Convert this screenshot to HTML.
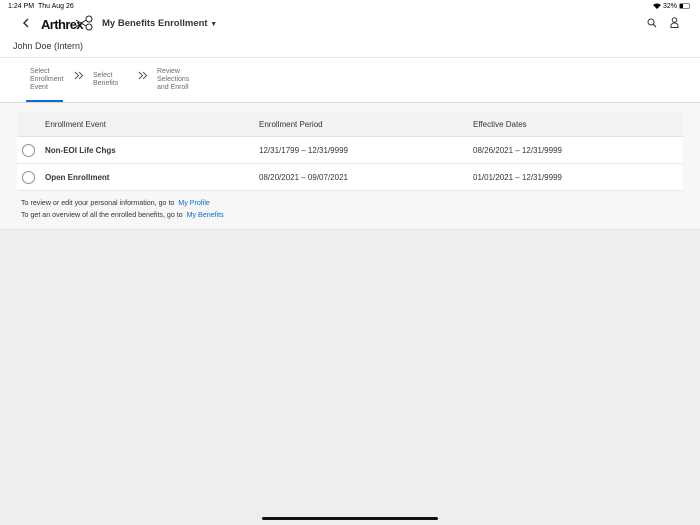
<!DOCTYPE html>
<html><head><meta charset="utf-8"><style>
*{margin:0;padding:0;box-sizing:border-box}
body{width:700px;height:525px;background:#edeef0;font-family:"Liberation Sans",Arial,sans-serif;position:relative;overflow:hidden;color:#32363a}
.a{position:absolute}
.top{left:0;top:0;width:700px;height:58px;background:#fff;border-bottom:1px solid #e5e5e5}
.wiz{left:0;top:58px;width:700px;height:45px;background:#fff;border-bottom:1px solid #d9d9d9}
.sec{left:0;top:103px;width:700px;height:127px;background:#f7f7f7;border-bottom:1px solid #e2e2e2}
.step{font-size:7px;color:#6a6d70;line-height:8px}
.tbl{left:17px;top:112px;width:666px;height:79px;background:#fff}
.th{left:0;top:0;width:666px;height:25px;background:#f2f2f2;border-bottom:1px solid #e0e0e0;font-size:8px;color:#32363a}
.row{left:0;width:666px;height:27px;border-bottom:1px solid #e8e8e8;font-size:8px}
.rad{left:5px;top:7px;width:13px;height:13px;border:1px solid #89919a;border-radius:50%}
.lnk{color:#0a6ed1}
</style></head><body>
<div class="a top">
 <div class="a" style="left:8px;top:3px;font-size:7px;color:#000">1:24 PM&nbsp;&nbsp;Thu Aug 26</div>
 <div class="a" style="left:653px;top:3px;font-size:7px;color:#000">
  <svg width="8" height="6" viewBox="0 0 8 6" style="vertical-align:-1px"><path d="M0 2a6 6 0 0 1 8 0L4 6z" fill="#000"/></svg> 32%</div>
 <div class="a" style="left:679px;top:3px;width:11px;height:6px;border:1px solid #888;border-radius:2px"><div style="width:3px;height:4px;background:#000"></div></div>
 <svg class="a" style="left:22px;top:18px" width="8" height="10" viewBox="0 0 8 10"><path d="M6 1L2 5l4 4" stroke="#32363a" stroke-width="1.5" fill="none"/></svg>
 <div class="a" style="left:41px;top:17px;font-size:13px;font-weight:bold;color:#111;letter-spacing:-0.6px">Arthrex</div>
 <svg class="a" style="left:72px;top:14px" width="22" height="18" viewBox="0 0 22 18"><circle cx="17" cy="5" r="3" stroke="#222" fill="none"/><circle cx="17" cy="13" r="3" stroke="#222" fill="none"/><path d="M4 13L14 6M4 6l10 6" stroke="#222" fill="none"/></svg>
 <div class="a" style="left:102px;top:18px;font-size:9.5px;font-weight:bold;color:#32363a">My Benefits Enrollment <span style="font-size:7px">▼</span></div>
 <svg class="a" style="left:647px;top:18px" width="10" height="10" viewBox="0 0 10 10"><circle cx="4" cy="4" r="3" stroke="#32363a" fill="none"/><path d="M6 6l3 3" stroke="#32363a" stroke-width="1.2"/></svg>
 <svg class="a" style="left:670px;top:17px" width="9" height="11" viewBox="0 0 9 11"><circle cx="4.5" cy="3" r="2.3" stroke="#32363a" fill="none"/><path d="M1 10.5V8.5a3.5 2.5 0 0 1 7 0v2z" stroke="#32363a" fill="none"/></svg>
 <div class="a" style="left:13px;top:41px;font-size:9px">John Doe (Intern)</div>
</div>
<div class="a wiz">
 <div class="a step" style="left:30px;top:10px">Select<br>Enrollment<br>Event</div>
 <div class="a" style="left:26px;top:42px;width:37px;height:2px;background:#0a6ed1"></div>
 <svg class="a" style="left:74px;top:13px" width="10" height="9" viewBox="0 0 10 9"><path d="M1 1l3.5 3.5L1 8M5 1l3.5 3.5L5 8" stroke="#555" fill="none"/></svg>
 <div class="a step" style="left:93px;top:14px">Select<br>Benefits</div>
 <svg class="a" style="left:138px;top:13px" width="10" height="9" viewBox="0 0 10 9"><path d="M1 1l3.5 3.5L1 8M5 1l3.5 3.5L5 8" stroke="#555" fill="none"/></svg>
 <div class="a step" style="left:157px;top:10px">Review<br>Selections<br>and Enroll</div>
</div>
<div class="a sec">
 <div class="a tbl" style="top:9px">
  <div class="a th"><span class="a" style="left:28px;top:8px">Enrollment Event</span><span class="a" style="left:242px;top:8px">Enrollment Period</span><span class="a" style="left:456px;top:8px">Effective Dates</span></div>
  <div class="a row" style="top:25px"><div class="a rad"></div><b class="a" style="left:28px;top:9px">Non-EOI Life Chgs</b><span class="a" style="left:242px;top:9px">12/31/1799 – 12/31/9999</span><span class="a" style="left:456px;top:9px">08/26/2021 – 12/31/9999</span></div>
  <div class="a row" style="top:52px"><div class="a rad"></div><b class="a" style="left:28px;top:9px">Open Enrollment</b><span class="a" style="left:242px;top:9px">08/20/2021 – 09/07/2021</span><span class="a" style="left:456px;top:9px">01/01/2021 – 12/31/9999</span></div>
 </div>
 <div class="a" style="left:21px;top:96px;font-size:7.1px">To review or edit your personal information, go to &nbsp;<span class="lnk">My Profile</span></div>
 <div class="a" style="left:21px;top:108px;font-size:7.1px">To get an overview of all the enrolled benefits, go to &nbsp;<span class="lnk">My Benefits</span></div>
</div>
<div class="a" style="left:262px;top:517px;width:176px;height:3px;border-radius:2px;background:#111"></div>
</body></html>
